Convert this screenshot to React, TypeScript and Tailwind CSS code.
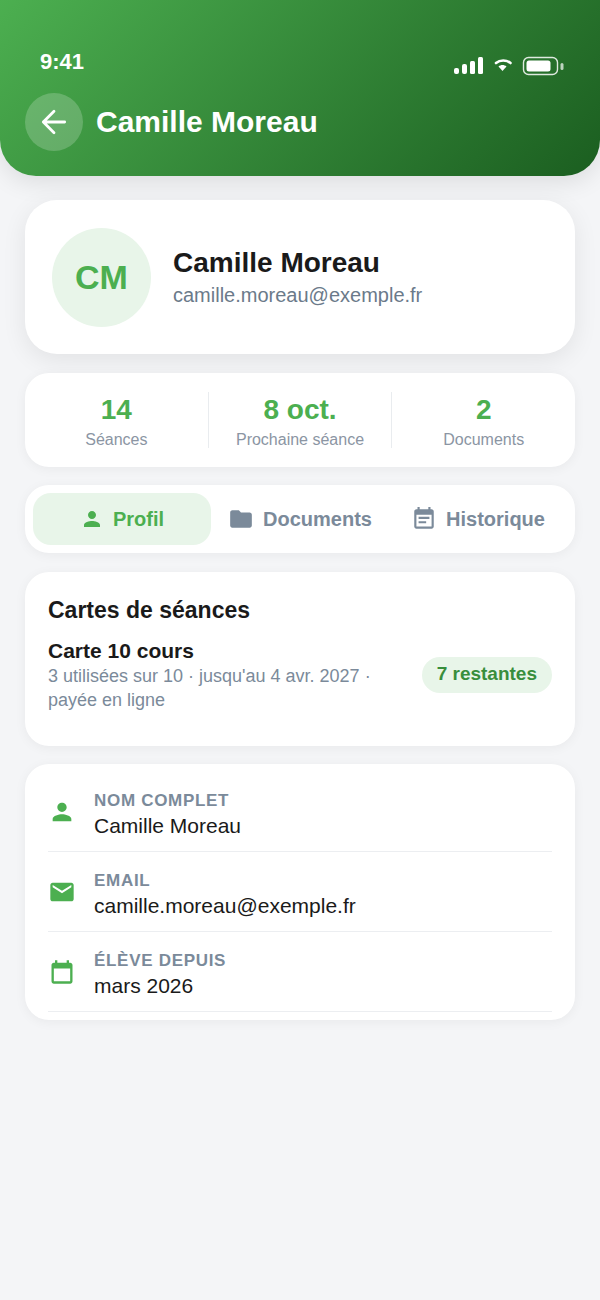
import React from "react";

const Person = ({ className }: { className: string }) => (
  <svg viewBox="0 0 24 24" className={className} fill="currentColor"><path d="M12 12c2.21 0 4-1.79 4-4s-1.79-4-4-4-4 1.79-4 4 1.79 4 4 4zm0 2c-2.67 0-8 1.34-8 4v2h16v-2c0-2.66-5.33-4-8-4z" /></svg>
);
const Folder = ({ className }: { className: string }) => (
  <svg viewBox="0 0 24 24" className={className} fill="currentColor"><path d="M10 4H4c-1.1 0-1.99.9-1.99 2L2 18c0 1.1.9 2 2 2h16c1.1 0 2-.9 2-2V8c0-1.1-.9-2-2-2h-8l-2-2z" /></svg>
);
const EventNote = ({ className }: { className: string }) => (
  <svg viewBox="0 0 24 24" className={className} fill="currentColor"><path d="M17 10H7v2h10v-2zm2-7h-1V1h-2v2H8V1H6v2H5c-1.11 0-1.99.9-1.99 2L3 19c0 1.1.89 2 2 2h14c1.1 0 2-.9 2-2V5c0-1.1-.9-2-2-2zm0 16H5V8h14v11zm-5-5H7v2h7v-2z" /></svg>
);
const Mail = ({ className }: { className: string }) => (
  <svg viewBox="0 0 24 24" className={className} fill="currentColor"><path d="M20 4H4c-1.1 0-1.99.9-1.99 2L2 18c0 1.1.9 2 2 2h16c1.1 0 2-.9 2-2V6c0-1.1-.9-2-2-2zm0 4l-8 5-8-5V6l8 5 8-5v2z" /></svg>
);
const Calendar = ({ className }: { className: string }) => (
  <svg viewBox="0 0 24 24" className={className} fill="currentColor"><path d="M19 4h-1V2h-2v2H8V2H6v2H5c-1.1 0-2 .9-2 2v14c0 1.1.9 2 2 2h14c1.1 0 2-.9 2-2V6c0-1.1-.9-2-2-2zm0 16H5V9h14v11z" /></svg>
);

const Stat = ({ value, label, border }: { value: string; label: string; border?: boolean }) => (
  <div className={`flex-1 flex flex-col items-center h-[56px] ${border ? "border-r border-[#e9ecef]" : ""}`}>
    <div className="text-[28px] leading-[36px] font-bold text-[#4caf50]">{value}</div>
    <div className="text-[16px] leading-[24px] text-[#8b95a3]">{label}</div>
  </div>
);

const Row = ({ icon, label, value }: { icon: React.ReactNode; label: string; value: string }) => (
  <div className="flex items-center h-[80px] border-b border-[#eceef1] pt-[7px]">
    <div className="w-[46px] shrink-0 text-[#4caf50] -mt-[6px]">{icon}</div>
    <div>
      <div className="text-[17px] leading-[22px] font-bold tracking-[0.7px] text-[#7b8a9a]">{label}</div>
      <div className="text-[21px] leading-[28px] text-[#1a1a1a]">{value}</div>
    </div>
  </div>
);

export default function App() {
  return (
    <div className="w-[600px] h-[1300px] bg-[#f4f5f7] overflow-hidden font-['Liberation_Sans',sans-serif]">
      <div className="h-[176px] rounded-b-[36px] bg-[linear-gradient(135deg,#4caf50,#1b5e20)] shadow-[0_6px_24px_rgba(0,0,0,0.1)] px-[25px] pt-[47px]">
        <div className="flex justify-between items-center h-[30px] pl-[15px] pr-[10px]">
          <span className="text-[22px] font-bold text-white leading-[28px]">9:41</span>
          <svg width="112" height="22" viewBox="0 0 112 22" className="mt-[8px] text-white">
            <g fill="currentColor">
              <rect x="1" y="13" width="5" height="6" rx="2" />
              <rect x="9" y="9" width="5" height="10" rx="2" />
              <rect x="17" y="6" width="5" height="13" rx="1.5" />
              <rect x="25" y="2" width="5" height="17" rx="1.5" />
              <path d="M45.5 11.5c2.4-2 5.6-2 8 0l-4 4.5z" />
            </g>
            <path d="M43 8c4-3.4 10.500-3.400 14.500 0" fill="none" stroke="currentColor" strokeWidth="2.600" strokeLinecap="round" />
            <rect x="70.500" y="2.500" width="34" height="17" rx="5" fill="none" stroke="currentColor" strokeWidth="1.400" opacity="0.85" />
            <rect x="73.500" y="5.500" width="24" height="11" rx="2.500" fill="currentColor" />
            <rect x="107.500" y="8" width="3" height="7" rx="1.500" fill="currentColor" opacity="0.7" />
          </svg>
        </div>
        <div className="flex items-center gap-[13px] mt-[16px]">
          <div className="w-[58px] h-[58px] rounded-full bg-white/20 flex items-center justify-center">
            <svg width="32" height="32" viewBox="0 0 24 24" fill="none" stroke="white" strokeWidth="2.1" strokeLinecap="round" strokeLinejoin="round"><path d="M20 12H4M12 4l-8 8 8 8" /></svg>
          </div>
          <span className="text-[30px] leading-[36px] font-bold text-white">Camille Moreau</span>
        </div>
      </div>

      <div className="px-[25px] pt-[24px] flex flex-col gap-[18.5px]">
        <div className="h-[154px] bg-white rounded-[32px] shadow-[0_6px_24px_rgba(0,0,0,0.08)] flex items-center pl-[27px] gap-[22px]">
          <div className="w-[99px] h-[99px] rounded-full bg-[#e8f5e9] flex items-center justify-center text-[34px] font-bold text-[#4caf50]">CM</div>
          <div>
            <div className="text-[28px] leading-[36px] font-bold text-[#1a1a1a]">Camille Moreau</div>
            <div className="text-[20px] leading-[28px] text-[#6b7a8a]">camille.moreau@exemple.fr</div>
          </div>
        </div>

        <div className="h-[94px] bg-white rounded-[24px] shadow-[0_2px_12px_rgba(0,0,0,0.05)] flex pt-[19px]">
          <Stat value="14" label="Séances" border />
          <Stat value="8 oct." label="Prochaine séance" border />
          <Stat value="2" label="Documents" />
        </div>

        <div className="h-[68px] bg-white rounded-[24px] shadow-[0_2px_12px_rgba(0,0,0,0.05)] flex p-[8px]">
          <div className="flex-1 rounded-[18px] bg-[#e8f5e9] flex items-center justify-center gap-[9px] text-[#4caf50] text-[20px] font-bold">
            <Person className="w-[24px] h-[24px]" />Profil
          </div>
          <div className="flex-1 flex items-center justify-center gap-[9px] text-[#7b8a9a] text-[20px] font-bold">
            <Folder className="w-[26px] h-[26px]" />Documents
          </div>
          <div className="flex-1 flex items-center justify-center gap-[9px] text-[#7b8a9a] text-[20px] font-bold">
            <EventNote className="w-[26px] h-[26px]" />Historique
          </div>
        </div>

        <div className="h-[174px] bg-white rounded-[24px] shadow-[0_2px_12px_rgba(0,0,0,0.05)] px-[23px] pt-[23px]">
          <div className="text-[23px] leading-[30px] font-bold text-[#1a1a1a]">Cartes de séances</div>
          <div className="flex items-center justify-between mt-[13px]">
            <div className="w-[340px]">
              <div className="text-[21px] leading-[26px] font-bold text-[#1a1a1a]">Carte 10 cours</div>
              <div className="text-[18px] leading-[24px] text-[#7b8a9a]">3 utilisées sur 10 · jusqu'au 4 avr. 2027 · payée en ligne</div>
            </div>
            <div className="h-[36px] px-[15px] rounded-full bg-[#e8f5e9] text-[#388e3c] text-[19px] font-bold flex items-center">7 restantes</div>
          </div>
        </div>

        <div className="bg-white rounded-[24px] shadow-[0_2px_12px_rgba(0,0,0,0.05)] px-[23px] pt-[8px] h-[256px]">
          <Row icon={<Person className="w-[28px] h-[28px]" />} label="NOM COMPLET" value="Camille Moreau" />
          <Row icon={<Mail className="w-[28px] h-[28px]" />} label="EMAIL" value="camille.moreau@exemple.fr" />
          <Row icon={<Calendar className="w-[28px] h-[28px]" />} label="ÉLÈVE DEPUIS" value="mars 2026" />
        </div>
      </div>
    </div>
  );
}
